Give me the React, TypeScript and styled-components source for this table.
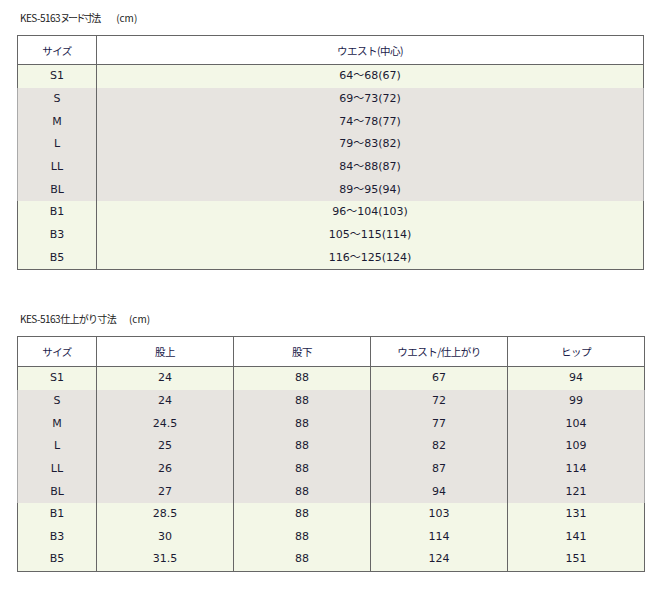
import React from "react";
import styled, { createGlobalStyle } from "styled-components";

const Global = createGlobalStyle`
  html, body { margin: 0; padding: 0; background: #fff; }
  body { font-family: "DejaVu Sans", "Noto Sans CJK JP", sans-serif; color: #222; }
`;

const Page = styled.div`
  padding: 11px 16px 0 17px;
  width: 627px;
`;

const Title = styled.div<{ $top: number; $gap: number }>`
  margin-top: ${(p) => p.$top}px;
  padding-left: 3px;
  font-family: "Noto Sans CJK JP", sans-serif;
  font-size: 10px;
  line-height: 13px;
  color: #222;
  display: flex;
  gap: ${(p) => p.$gap}px;
`;

const Code = styled.span`
  letter-spacing: -0.5px;
`;

const Kana = styled.span<{ $ls: number }>`
  letter-spacing: ${(p) => p.$ls}px;
`;

const Table = styled.table`
  margin-top: 11px;
  width: 627px;
  border-collapse: collapse;
  table-layout: fixed;
`;

const HeadCell = styled.th<{ $h: number }>`
  height: ${(p) => p.$h}px;
  padding: 0;
  background: #fff;
  border: 1px solid #666;
  font-weight: normal;
  font-family: "Noto Sans CJK JP", sans-serif;
  font-size: 10.5px;
  letter-spacing: -0.5px;
  color: #1a1a4a;
  text-align: center;
  vertical-align: middle;
`;

type Tone = "green" | "gray";

const Row = styled.tr<{ $tone: Tone }>`
  background: ${(p) => (p.$tone === "green" ? "#f3f7e7" : "#e7e4e0")};
`;

const Cell = styled.td<{ $tone: Tone; $edge?: "first" | "last" }>`
  height: 22.67px;
  padding: 0;
  border-left: 1px solid #666;
  border-right: 1px solid #666;
  ${(p) =>
    p.$tone === "gray" && p.$edge === "first" ? "border-left-color: #aaa;" : ""}
  ${(p) =>
    p.$tone === "gray" && p.$edge === "last" ? "border-right-color: #aaa;" : ""}
  font-size: 11px;
  line-height: 14px;
  color: #1a1a33;
  text-align: center;
  vertical-align: middle;
`;

const Body = styled.tbody`
  tr:last-child td { border-bottom: 1px solid #666; }
`;

const sizes = ["S1", "S", "M", "L", "LL", "BL", "B1", "B3", "B5"];
const tones: Tone[] = ["green", "gray", "gray", "gray", "gray", "gray", "green", "green", "green"];

const nude = [
  "64～68(67)",
  "69～73(72)",
  "74～78(77)",
  "79～83(82)",
  "84～88(87)",
  "89～95(94)",
  "96～104(103)",
  "105～115(114)",
  "116～125(124)",
];

const finished = [
  ["24", "88", "67", "94"],
  ["24", "88", "72", "99"],
  ["24.5", "88", "77", "104"],
  ["25", "88", "82", "109"],
  ["26", "88", "87", "114"],
  ["27", "88", "94", "121"],
  ["28.5", "88", "103", "131"],
  ["30", "88", "114", "141"],
  ["31.5", "88", "124", "151"],
];

function renderRow(cells: string[], i: number) {
  const tone = tones[i];
  return (
    <Row key={i} $tone={tone}>
      {cells.map((c, j) => (
        <Cell
          key={j}
          $tone={tone}
          $edge={j === 0 ? "first" : j === cells.length - 1 ? "last" : undefined}
        >
          {c}
        </Cell>
      ))}
    </Row>
  );
}

export default function App() {
  return (
    <Page>
      <Global />
      <Title $top={0} $gap={17}>
        <span>
          <Code>KES-5163</Code>
          <Kana $ls={-2.2}>ヌード寸法</Kana>
        </span>
        <span>(cm)</span>
      </Title>
      <Table>
        <colgroup>
          <col style={{ width: 79 }} />
          <col />
        </colgroup>
        <thead>
          <tr>
            <HeadCell $h={28}>サイズ</HeadCell>
            <HeadCell $h={28}>ウエスト(中心)</HeadCell>
          </tr>
        </thead>
        <Body>{sizes.map((s, i) => renderRow([s, nude[i]], i))}</Body>
      </Table>

      <Title $top={42} $gap={13}>
        <span>
          <Code>KES-5163</Code>
          <Kana $ls={-0.7}>仕上がり寸法</Kana>
        </span>
        <span>(cm)</span>
      </Title>
      <Table>
        <colgroup>
          <col style={{ width: 79 }} />
          <col style={{ width: 137 }} />
          <col style={{ width: 137 }} />
          <col style={{ width: 137 }} />
          <col style={{ width: 137 }} />
        </colgroup>
        <thead>
          <tr>
            <HeadCell $h={29}>サイズ</HeadCell>
            <HeadCell $h={29}>股上</HeadCell>
            <HeadCell $h={29}>股下</HeadCell>
            <HeadCell $h={29}>ウエスト/仕上がり</HeadCell>
            <HeadCell $h={29}>ヒップ</HeadCell>
          </tr>
        </thead>
        <Body>{sizes.map((s, i) => renderRow([s, ...finished[i]], i))}</Body>
      </Table>
    </Page>
  );
}
